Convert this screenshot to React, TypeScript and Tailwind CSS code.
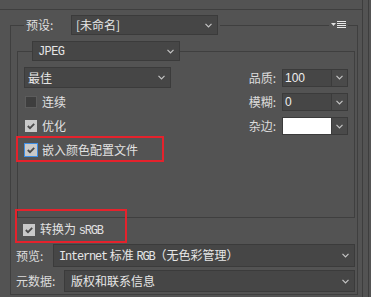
import React from 'react';

const cjk = { fontFamily: '"Noto Sans CJK SC", "Noto Sans", sans-serif' };
const mono = { fontFamily: '"Liberation Mono", "Noto Sans CJK SC", monospace' };
const sans = { fontFamily: '"Liberation Sans", Arial, sans-serif' };

const Chevron = () => (
  <svg width="7" height="5" viewBox="0 0 7 5" className="shrink-0">
    <polyline points="0.5,0.8 3.5,3.8 6.5,0.8" fill="none" stroke="#c4c4c4" strokeWidth="1.2" />
  </svg>
);

const Select: React.FC<{ className: string; children: React.ReactNode; pad?: string }> = ({ className, children, pad = 'pl-[4px]' }) => (
  <div className={`flex items-center justify-between bg-[#464646] border border-[#3b3b3b] pr-[5px] text-[12px] text-[#e6e6e6] ${pad} ${className}`}>
    <span className="whitespace-nowrap leading-[16px]">{children}</span>
    <Chevron />
  </div>
);

const Check = ({ checked, focus }: { checked?: boolean; focus?: boolean }) => (
  <div
    className={`w-[12px] h-[12px] shrink-0 flex items-center justify-center ${
      checked ? 'bg-[#c9c9c9]' : 'bg-[#3e3e3e] border border-[#5c5c5c]'
    } ${focus ? 'outline outline-[1px] outline-[#3d8ee6]' : ''}`}
  >
    {checked && (
      <svg width="10" height="10" viewBox="0 0 10 10">
        <polyline points="1.8,5 4,7.2 8.2,2.8" fill="none" stroke="#4a4a4a" strokeWidth="1.8" />
      </svg>
    )}
  </div>
);

const NumberField = ({ label, value, white }: { label: string; value?: string; white?: boolean }) => (
  <div className="flex items-center">
    <span className="w-[40px] text-right pr-[6px] text-[12px] text-[#dcdcdc]" style={cjk}>{label}</span>
    <div
      className={`w-[50px] h-[18px] flex items-center pl-[2px] text-[12px] text-[#eeeeee] border border-[#3b3b3b] ${white ? 'bg-white' : 'bg-[#464646]'}`}
      style={sans}
    >
      {value}
    </div>
    <div className="w-[16px] h-[18px] flex items-center justify-center bg-[#4a4a4a] border border-l-0 border-[#3b3b3b]">
      <Chevron />
    </div>
  </div>
);

const CheckRow = ({ label, checked, focus }: { label: React.ReactNode; checked?: boolean; focus?: boolean }) => (
  <div className="flex items-center gap-[5px] pl-[1px]">
    <Check checked={checked} focus={focus} />
    <span className="text-[12px] text-[#e2e2e2] leading-[16px] whitespace-nowrap" style={cjk}>{label}</span>
  </div>
);

export default function App() {
  return (
    <div className="w-[371px] h-[297px] bg-[#535353] overflow-hidden flex select-none" style={cjk}>
      <div className="relative w-[363px] h-full border-r border-[#3d3d3d]">
        <div className="mt-[9px] border-t border-[#3f3f3f]">
          <fieldset className="ml-[10px] mr-[4px] mt-[5px] border border-[#3f3f3f] px-0 pb-[2px]">
            <legend className="ml-[13px] pr-[2px]">
              <div className="flex items-center">
                <span className="w-[47px] pl-[2px] text-[12px] text-[#dedede]">预设:</span>
                <Select className="w-[147px] h-[20px]">[未命名]</Select>
              </div>
            </legend>

            <fieldset className="ml-[6px] mr-[2px] mt-[6px] border border-[#3f3f3f] px-[6px] pb-[55px]">
              <legend className="ml-[8px]">
                <Select className="w-[148px] h-[20px]" pad="pl-[5px]">
                  <span style={mono} className="tracking-[-0.6px]">JPEG</span>
                </Select>
              </legend>

              <div className="pt-[6px] flex flex-col">
                <div className="h-[21px] flex items-center justify-between">
                  <Select className="w-[147px] h-[21px]" pad="pl-[3px]">最佳</Select>
                  <NumberField label="品质:" value="100" />
                </div>
                <div className="mt-[2px] h-[24px] flex items-center justify-between">
                  <CheckRow label="连续" />
                  <NumberField label="模糊:" value="0" />
                </div>
                <div className="h-[24px] flex items-center justify-between">
                  <CheckRow label="优化" checked />
                  <NumberField label="杂边:" white />
                </div>
                <div className="h-[24px] flex items-center">
                  <CheckRow label="嵌入颜色配置文件" checked focus />
                </div>
              </div>
            </fieldset>

            <div className="h-[24px] flex items-center pl-[11px]">
              <CheckRow
                label={
                  <>
                    转换为 <span style={mono} className="tracking-[-1.2px]">sRGB</span>
                  </>
                }
                checked
              />
            </div>
            <div className="mt-[2px] flex items-center pl-[5px] pr-[2px]">
              <span className="w-[37px] text-[12px] text-[#dcdcdc]">预览:</span>
              <Select className="flex-1 h-[23px]" pad="pl-[5px]">
                <span style={mono} className="tracking-[-1.2px]">Internet</span> 标准{' '}
                <span style={mono} className="tracking-[-1.2px]">RGB</span>（无色彩管理）
              </Select>
            </div>
            <div className="mt-[3px] flex items-center pl-[5px] pr-[2px]">
              <span className="w-[48px] text-[12px] text-[#dcdcdc]">元数据:</span>
              <Select className="flex-1 h-[22px]" pad="pl-[6px]">版权和联系信息</Select>
            </div>
          </fieldset>
        </div>

        {/* panel menu */}
        <div className="absolute left-[329px] top-[19px] px-[2px] py-[1px] bg-[#535353]">
          <svg width="15" height="9" viewBox="0 0 15 9" className="block">
            <polygon points="0,3 5,3 2.5,6" fill="#e0e0e0" />
            <rect x="6" y="1" width="9" height="1" fill="#e8e8e8" />
            <rect x="6" y="3" width="9" height="1" fill="#e8e8e8" />
            <rect x="6" y="5" width="9" height="1" fill="#e8e8e8" />
            <rect x="6" y="7" width="9" height="1" fill="#e8e8e8" />
          </svg>
        </div>

        {/* annotation boxes */}
        <div className="absolute left-[16px] top-[136px] w-[148px] h-[26px] border-2 border-[#e5222c]" />
        <div className="absolute left-[15px] top-[209px] w-[112px] h-[34px] border-2 border-[#e5222c]" />
      </div>
      <div className="w-[6px] h-full border-r border-[#3d3d3d]" />
    </div>
  );
}
